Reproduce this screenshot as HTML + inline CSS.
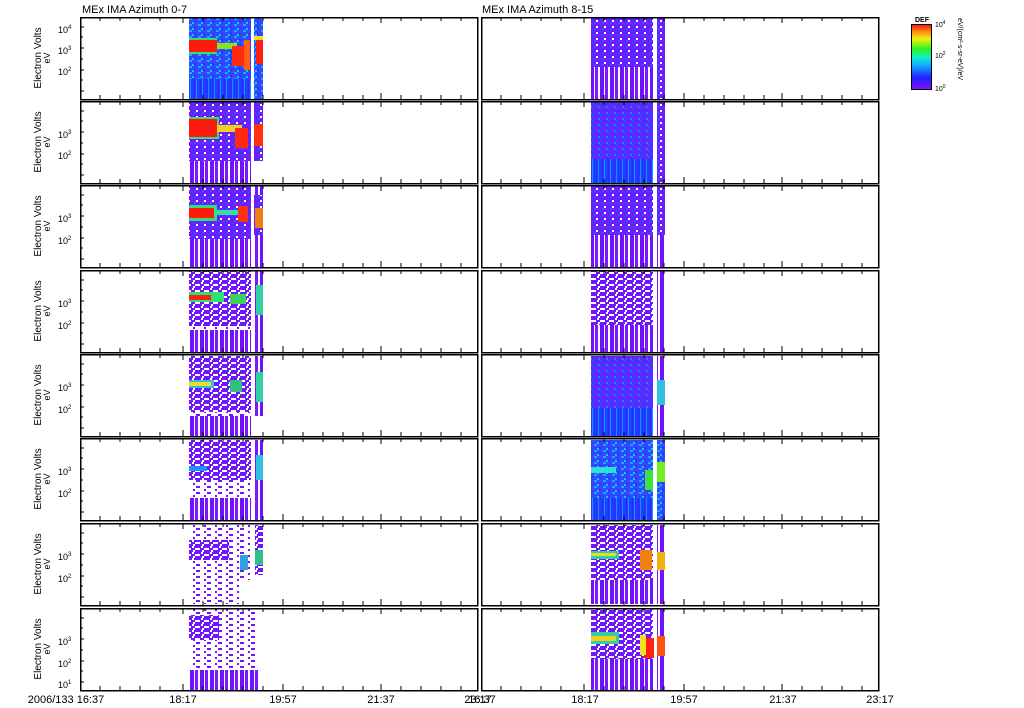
<!DOCTYPE html>
<html><head><meta charset="utf-8"><style>
html,body{margin:0;padding:0;background:#fff;width:1024px;height:708px;overflow:hidden}
svg{display:block}
text{font-family:"Liberation Sans",sans-serif;fill:#000}
</style></head><body>
<svg width="1024" height="708" viewBox="0 0 1024 708" xmlns="http://www.w3.org/2000/svg" shape-rendering="crispEdges">
<defs>
<pattern id="pB" width="9" height="6" patternUnits="userSpaceOnUse">
<rect width="9" height="6" fill="#2a4cff"/><rect x="0" y="0" width="3" height="2" fill="#19a8ff"/><rect x="5" y="3" width="2" height="2" fill="#3a2aff"/><rect x="3" y="4" width="2" height="2" fill="#10c8f0"/><rect x="7" y="1" width="2" height="2" fill="#5a30ff"/></pattern>
<pattern id="pP" width="8" height="6" patternUnits="userSpaceOnUse">
<rect width="8" height="6" fill="#6a1cff"/><rect x="0" y="0" width="2" height="2" fill="#3f40ff"/><rect x="4" y="2" width="2" height="2" fill="#fff"/><rect x="6" y="4" width="2" height="2" fill="#8a18ff"/><rect x="2" y="4" width="2" height="2" fill="#2a60ff"/></pattern>
<pattern id="pM" width="8" height="6" patternUnits="userSpaceOnUse">
<rect width="8" height="6" fill="#5a28ff"/><rect x="0" y="0" width="2" height="2" fill="#2a50ff"/><rect x="4" y="2" width="2" height="2" fill="#7a18ff"/><rect x="6" y="4" width="2" height="2" fill="#1a80ff"/><rect x="2" y="4" width="2" height="2" fill="#3a40ff"/></pattern>
<pattern id="pQ" width="9" height="6" patternUnits="userSpaceOnUse">
<rect width="9" height="6" fill="#7414ff"/><rect x="3" y="0" width="2" height="2" fill="#fff"/><rect x="0" y="2" width="2" height="2" fill="#fff"/><rect x="6" y="2" width="3" height="2" fill="#fff"/><rect x="4" y="4" width="2" height="2" fill="#fff"/><rect x="2" y="4" width="2" height="2" fill="#5030ff"/></pattern>
<pattern id="pR" width="11" height="6" patternUnits="userSpaceOnUse">
<rect width="11" height="6" fill="#fff"/><rect x="0" y="0" width="2" height="2" fill="#7414ff"/><rect x="6" y="3" width="2" height="2" fill="#7a10ff"/><rect x="9" y="0" width="2" height="2" fill="#7414ff"/></pattern>
<pattern id="pS" width="10" height="30" patternUnits="userSpaceOnUse">
<rect width="10" height="30" fill="#fff"/><rect x="0" width="4" height="30" fill="#7010ff"/><rect x="5" width="3" height="30" fill="#7a18ff"/></pattern>
<pattern id="pSB" width="6" height="30" patternUnits="userSpaceOnUse">
<rect width="6" height="30" fill="#1c40ff"/><rect x="2" width="1" height="30" fill="#3a20ff"/><rect x="4" width="1" height="30" fill="#1890ff"/></pattern>
<g id="ticksL">
<path d="M100 0v4M120 0v4M140 0v4M160 0v4M183 0v6M203 0v4M223 0v4M243 0v4M263 0v4M283 0v6M303 0v4M323 0v4M343 0v4M363 0v4M381 0v6M401 0v4M421 0v4M441 0v4M461 0v4" stroke="#000" stroke-width="1" fill="none"/>
</g>
<g id="frameL">
<rect x="80.5" y="0.5" width="397" height="82" fill="none" stroke="#000" stroke-width="1.5"/>
<use href="#ticksL"/><use href="#ticksL" transform="translate(0,82) scale(1,-1)"/>
<path d="M80 10h4M80 20h3M80 31h4M80 42h3M80 53h4M80 63h3M80 74h4" stroke="#000"/>
</g>
<g id="frameR">
<rect x="481.5" y="0.5" width="397" height="82" fill="none" stroke="#000" stroke-width="1.5"/>
<use href="#ticksL" transform="translate(401,0)"/><use href="#ticksL" transform="translate(401,82) scale(1,-1)"/>
</g>
</defs>

<text x="82" y="13" font-size="11">MEx IMA Azimuth 0-7</text>
<text x="482" y="13" font-size="11">MEx IMA Azimuth 8-15</text>

<!-- LEFT DATA -->
<rect x="189" y="17" width="62" height="62" fill="url(#pB)"/><rect x="189" y="79" width="62" height="20" fill="url(#pSB)"/>
<rect x="254" y="17" width="9" height="82" fill="url(#pB)"/>
<rect x="189" y="38" width="28" height="16" fill="#2fe070"/><rect x="189" y="40" width="28" height="12" fill="#ff1a10"/>
<rect x="217" y="43" width="20" height="6" fill="#90e020"/><rect x="232" y="46" width="16" height="20" fill="#ff2a10"/><rect x="244" y="40" width="6" height="30" fill="#ff6010"/>
<rect x="256" y="40" width="7" height="24" fill="#ff2010"/><rect x="254" y="36" width="9" height="4" fill="#f0e020"/>

<rect x="189" y="101" width="62" height="60" fill="url(#pP)"/><rect x="189" y="161" width="62" height="22" fill="url(#pS)"/>
<rect x="254" y="101" width="9" height="60" fill="url(#pP)"/>
<rect x="189" y="117" width="30" height="22" fill="#30e070"/><rect x="189" y="119" width="28" height="18" fill="#ff1a10"/>
<rect x="217" y="125" width="25" height="7" fill="#f0d020"/><rect x="235" y="128" width="13" height="20" fill="#ff2a10"/><rect x="254" y="124" width="9" height="22" fill="#ff3010"/>

<rect x="189" y="185" width="62" height="54" fill="url(#pP)"/><rect x="189" y="239" width="62" height="28" fill="url(#pS)"/>
<rect x="254" y="185" width="9" height="82" fill="url(#pS)"/><rect x="254" y="195" width="9" height="40" fill="url(#pP)"/>
<rect x="189" y="205" width="28" height="16" fill="#30e070"/><rect x="189" y="208" width="25" height="10" fill="#ff1a10"/>
<rect x="214" y="210" width="30" height="5" fill="#30e0a0"/><rect x="238" y="206" width="10" height="16" fill="#ff3010"/><rect x="255" y="208" width="8" height="20" fill="#f08010"/>

<rect x="189" y="270" width="62" height="56" fill="url(#pQ)"/><rect x="189" y="326" width="62" height="26" fill="url(#pR)"/><rect x="189" y="330" width="62" height="22" fill="url(#pS)"/>
<rect x="254" y="270" width="9" height="82" fill="url(#pS)"/><rect x="256" y="285" width="7" height="30" fill="#30d0a0"/>
<rect x="189" y="292" width="35" height="10" fill="#30e070"/><rect x="189" y="295" width="22" height="5" fill="#ff2010"/><rect x="230" y="294" width="16" height="10" fill="#40d060"/>

<rect x="189" y="356" width="62" height="56" fill="url(#pQ)"/><rect x="189" y="412" width="62" height="24" fill="url(#pR)"/><rect x="189" y="416" width="62" height="20" fill="url(#pS)"/>
<rect x="254" y="356" width="9" height="60" fill="url(#pS)"/><rect x="256" y="372" width="7" height="30" fill="#30d0a0"/>
<rect x="189" y="380" width="25" height="8" fill="#30c0e0"/><rect x="189" y="382" width="22" height="4" fill="#f0e020"/><rect x="230" y="380" width="12" height="12" fill="#30c080"/>

<rect x="189" y="440" width="62" height="58" fill="url(#pR)"/><rect x="189" y="440" width="62" height="40" fill="url(#pQ)"/><rect x="189" y="498" width="62" height="22" fill="url(#pS)"/>
<rect x="254" y="440" width="9" height="80" fill="url(#pS)"/><rect x="256" y="455" width="7" height="25" fill="#30c0e0"/>
<rect x="189" y="466" width="18" height="5" fill="#2090ff"/>

<rect x="189" y="525" width="62" height="55" fill="url(#pR)"/><rect x="189" y="540" width="40" height="20" fill="url(#pQ)"/><rect x="189" y="580" width="50" height="24" fill="url(#pR)"/>
<rect x="255" y="525" width="8" height="50" fill="url(#pQ)"/><rect x="255" y="550" width="8" height="15" fill="#30c090"/><rect x="240" y="555" width="8" height="15" fill="#30a0e0"/>

<rect x="189" y="609" width="70" height="60" fill="url(#pR)"/><rect x="189" y="615" width="30" height="25" fill="url(#pQ)"/><rect x="189" y="670" width="70" height="21" fill="url(#pS)"/>

<!-- RIGHT DATA -->
<rect x="591" y="17" width="62" height="50" fill="url(#pP)"/><rect x="591" y="67" width="62" height="32" fill="url(#pS)"/><rect x="657" y="17" width="8" height="82" fill="url(#pP)"/>
<rect x="591" y="101" width="62" height="58" fill="url(#pM)"/><rect x="591" y="159" width="62" height="24" fill="url(#pSB)"/><rect x="657" y="101" width="8" height="82" fill="url(#pP)"/>
<rect x="591" y="185" width="62" height="50" fill="url(#pP)"/><rect x="591" y="235" width="62" height="32" fill="url(#pS)"/><rect x="657" y="185" width="8" height="82" fill="url(#pS)"/><rect x="657" y="185" width="8" height="50" fill="url(#pP)"/>
<rect x="591" y="270" width="62" height="55" fill="url(#pQ)"/><rect x="591" y="325" width="62" height="27" fill="url(#pS)"/><rect x="657" y="270" width="8" height="82" fill="url(#pS)"/>
<rect x="591" y="356" width="62" height="52" fill="url(#pM)"/><rect x="591" y="408" width="62" height="28" fill="url(#pSB)"/><rect x="657" y="356" width="8" height="80" fill="url(#pS)"/><rect x="657" y="380" width="8" height="25" fill="#30c0e0"/>
<rect x="591" y="440" width="62" height="58" fill="url(#pB)"/><rect x="591" y="498" width="62" height="22" fill="url(#pSB)"/><rect x="657" y="440" width="8" height="80" fill="url(#pB)"/>
<rect x="591" y="467" width="25" height="6" fill="#30e0d0"/><rect x="645" y="470" width="8" height="20" fill="#40e040"/><rect x="657" y="462" width="8" height="20" fill="#70f020"/>
<rect x="591" y="525" width="62" height="55" fill="url(#pQ)"/><rect x="591" y="580" width="62" height="24" fill="url(#pS)"/><rect x="657" y="525" width="8" height="79" fill="url(#pS)"/>
<rect x="591" y="551" width="28" height="8" fill="#30d0a0"/><rect x="591" y="553" width="25" height="3" fill="#e0e020"/><rect x="640" y="550" width="12" height="20" fill="#f08010"/><rect x="657" y="552" width="8" height="18" fill="#f0b010"/>
<rect x="591" y="609" width="62" height="50" fill="url(#pQ)"/><rect x="591" y="659" width="62" height="32" fill="url(#pS)"/><rect x="657" y="609" width="8" height="82" fill="url(#pS)"/>
<rect x="591" y="632" width="28" height="12" fill="#30d0a0"/><rect x="591" y="636" width="25" height="5" fill="#f0d020"/><rect x="644" y="638" width="10" height="20" fill="#ff2010"/><rect x="640" y="635" width="6" height="20" fill="#f0e020"/><rect x="657" y="636" width="8" height="20" fill="#ff5010"/>

<!-- FRAMES -->
<use href="#frameL" y="17"/><use href="#frameL" y="101"/><use href="#frameL" y="185"/><use href="#frameL" y="270"/><use href="#frameL" y="354"/><use href="#frameL" y="438"/><use href="#frameL" y="523"/><use href="#frameL" y="608"/>
<use href="#frameR" y="17"/><use href="#frameR" y="101"/><use href="#frameR" y="185"/><use href="#frameR" y="270"/><use href="#frameR" y="354"/><use href="#frameR" y="438"/><use href="#frameR" y="523"/><use href="#frameR" y="608"/>

<g font-size="10">
<g transform="translate(0,0)"><text transform="translate(41,58) rotate(-90)" text-anchor="middle">Electron Volts</text><text transform="translate(50,58) rotate(-90)" text-anchor="middle" font-size="9">eV</text></g>
<g transform="translate(0,84)"><text transform="translate(41,58) rotate(-90)" text-anchor="middle">Electron Volts</text><text transform="translate(50,58) rotate(-90)" text-anchor="middle" font-size="9">eV</text></g>
<g transform="translate(0,168)"><text transform="translate(41,58) rotate(-90)" text-anchor="middle">Electron Volts</text><text transform="translate(50,58) rotate(-90)" text-anchor="middle" font-size="9">eV</text></g>
<g transform="translate(0,253)"><text transform="translate(41,58) rotate(-90)" text-anchor="middle">Electron Volts</text><text transform="translate(50,58) rotate(-90)" text-anchor="middle" font-size="9">eV</text></g>
<g transform="translate(0,337)"><text transform="translate(41,58) rotate(-90)" text-anchor="middle">Electron Volts</text><text transform="translate(50,58) rotate(-90)" text-anchor="middle" font-size="9">eV</text></g>
<g transform="translate(0,421)"><text transform="translate(41,58) rotate(-90)" text-anchor="middle">Electron Volts</text><text transform="translate(50,58) rotate(-90)" text-anchor="middle" font-size="9">eV</text></g>
<g transform="translate(0,506)"><text transform="translate(41,58) rotate(-90)" text-anchor="middle">Electron Volts</text><text transform="translate(50,58) rotate(-90)" text-anchor="middle" font-size="9">eV</text></g>
<g transform="translate(0,591)"><text transform="translate(41,58) rotate(-90)" text-anchor="middle">Electron Volts</text><text transform="translate(50,58) rotate(-90)" text-anchor="middle" font-size="9">eV</text></g>
</g>
<g font-size="9">
<text x="58" y="33">10<tspan font-size="6" dy="-4">4</tspan></text>
<text x="58" y="54">10<tspan font-size="6" dy="-4">3</tspan></text>
<text x="58" y="75">10<tspan font-size="6" dy="-4">2</tspan></text>
<text x="58" y="138">10<tspan font-size="6" dy="-4">3</tspan></text><text x="58" y="159">10<tspan font-size="6" dy="-4">2</tspan></text>
<text x="58" y="222">10<tspan font-size="6" dy="-4">3</tspan></text><text x="58" y="244">10<tspan font-size="6" dy="-4">2</tspan></text>
<text x="58" y="307">10<tspan font-size="6" dy="-4">3</tspan></text><text x="58" y="329">10<tspan font-size="6" dy="-4">2</tspan></text>
<text x="58" y="391">10<tspan font-size="6" dy="-4">3</tspan></text><text x="58" y="413">10<tspan font-size="6" dy="-4">2</tspan></text>
<text x="58" y="475">10<tspan font-size="6" dy="-4">3</tspan></text><text x="58" y="497">10<tspan font-size="6" dy="-4">2</tspan></text>
<text x="58" y="560">10<tspan font-size="6" dy="-4">3</tspan></text><text x="58" y="582">10<tspan font-size="6" dy="-4">2</tspan></text>
<text x="58" y="645">10<tspan font-size="6" dy="-4">3</tspan></text><text x="58" y="667">10<tspan font-size="6" dy="-4">2</tspan></text><text x="58" y="688">10<tspan font-size="6" dy="-4">1</tspan></text>
</g>

<g font-size="11" text-anchor="middle">
<text x="66" y="703">2006/133 16:37</text>
<text x="183" y="703">18:17</text><text x="283" y="703">19:57</text><text x="381" y="703">21:37</text><text x="478" y="703">23:17</text>
<text x="482" y="703">16:37</text>
<text x="585" y="703">18:17</text><text x="684" y="703">19:57</text><text x="783" y="703">21:37</text><text x="880" y="703">23:17</text>
</g>

<defs><linearGradient id="cb" x1="0" y1="1" x2="0" y2="0">
<stop offset="0" stop-color="#8010ff"/><stop offset="0.18" stop-color="#2020ff"/><stop offset="0.38" stop-color="#10b0ff"/><stop offset="0.5" stop-color="#10f0c0"/><stop offset="0.62" stop-color="#30f020"/><stop offset="0.78" stop-color="#f0f010"/><stop offset="0.9" stop-color="#ff8010"/><stop offset="1" stop-color="#ff1010"/></linearGradient></defs>
<rect x="911.5" y="24.5" width="20" height="65" fill="url(#cb)" stroke="#000"/>
<text x="915" y="22" font-size="7" font-weight="bold">DEF</text>
<text x="935" y="27" font-size="7">10<tspan font-size="5" dy="-3">4</tspan></text>
<text x="935" y="58" font-size="7">10<tspan font-size="5" dy="-3">2</tspan></text>
<text x="935" y="91" font-size="7">10<tspan font-size="5" dy="-3">0</tspan></text>
<text transform="translate(958,18) rotate(90)" font-size="7">eV/(cm²-s-sr-eV)/eV</text>
</svg>
</body></html>
